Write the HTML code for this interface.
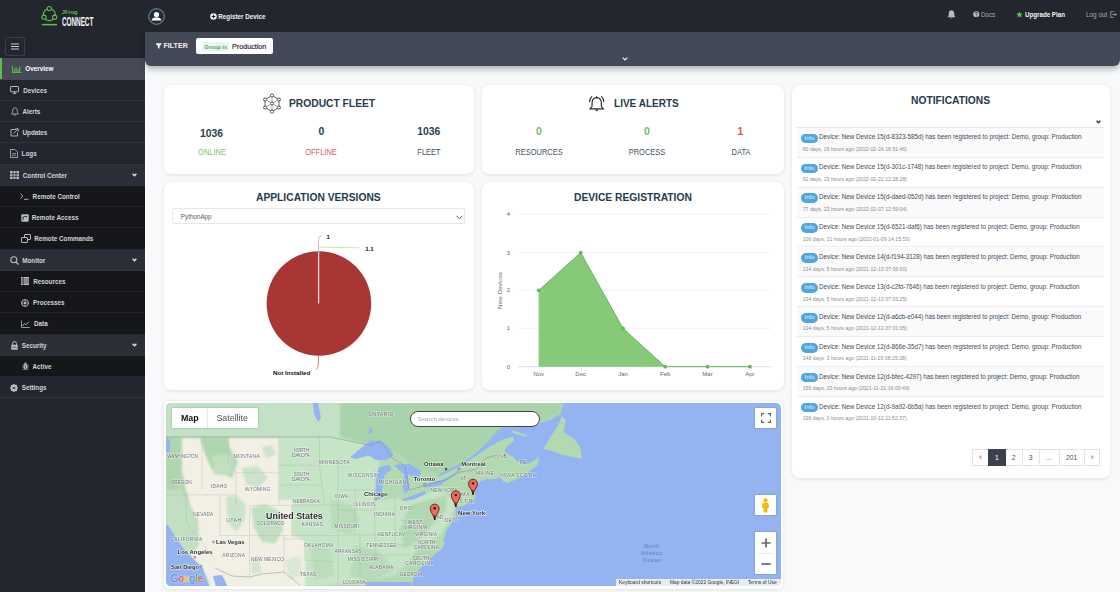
<!DOCTYPE html>
<html><head><meta charset="utf-8">
<style>
*{box-sizing:border-box;margin:0;padding:0}
html,body{width:1120px;height:592px;overflow:hidden;background:#f8f9fa;font-family:"Liberation Sans",sans-serif;position:relative}
.a{position:absolute}
#hdr{left:0;top:0;width:1120px;height:32px;background:#23262e}
#side{left:0;top:32px;width:145px;height:560px;background:#23262e}
.row{position:absolute;left:0;width:145px;height:21.25px;border-bottom:1px solid #30333b;color:#d3d4d7;font-size:6.3px;font-weight:bold;line-height:21.2px;white-space:nowrap}
.row.sub{background:#16171b;border-bottom:1px solid #24262b}
.row.grp{background:#2b2e36}
.row .ic{position:absolute;top:0;height:21.2px;display:flex;align-items:center}
.row .tx{position:absolute;top:0}
.chev{position:absolute;right:9px;top:0}
#filter{left:145px;top:32px;width:975px;height:33.5px;background:#444957;border-radius:0 0 6px 6px;box-shadow:0 3px 6px rgba(0,0,0,0.3)}
.card{position:absolute;background:#fff;border-radius:7px;box-shadow:0 1px 4px rgba(0,0,0,0.09),0 0 1px rgba(0,0,0,0.08)}
.ttl{position:absolute;font-weight:bold;color:#253a4d;font-size:11.8px;line-height:14px;white-space:nowrap;transform-origin:0 0;transform:scaleX(0.87)}
.num{position:absolute;font-weight:bold;font-size:10.4px;margin-top:0.9px;color:#2c3e50;white-space:nowrap;text-align:center;width:60px}
.lbl{position:absolute;font-size:8.3px;transform:scaleX(0.9);transform-origin:50% 0;margin-top:-0.2px;color:#3f5163;white-space:nowrap;text-align:center;width:80px}
</style></head><body>
<div id="hdr" class="a">
  <!-- logo -->
  <svg class="a" style="left:40px;top:3px" width="20" height="24" viewBox="0 0 20 24">
    <circle cx="9.3" cy="11.6" r="6" fill="none" stroke="#5cbf4a" stroke-width="1.2"/>
    <g fill="#23262e" stroke="#5cbf4a" stroke-width="1.1">
      <circle cx="9.3" cy="5.6" r="2.1"/>
      <circle cx="4" cy="14.2" r="2.1"/>
      <circle cx="14.6" cy="14.2" r="2.1"/>
    </g>
    <rect x="1.8" y="20.9" width="15.2" height="1.5" fill="#5cbf4a"/>
  </svg>
  <div class="a" style="left:61.8px;top:9.2px;font-size:5.7px;font-weight:bold;color:#5cbf4a;line-height:7px">JFrog</div>
  <div class="a" style="left:61.8px;top:14.7px;font-size:12px;font-weight:bold;color:#f2f2f2;transform:scaleX(0.54);transform-origin:0 0;letter-spacing:-0.2px">CONNECT</div>
  <!-- avatar -->
  <svg class="a" style="left:147.5px;top:8px" width="17" height="17" viewBox="0 0 17 17">
    <circle cx="8.5" cy="8.5" r="7.8" fill="#1e2f3d" stroke="#8a9096" stroke-width="1"/>
    <circle cx="8.5" cy="6.6" r="2.6" fill="#fff"/>
    <path d="M3.6 12.6 Q4 9.6 7.2 9.4 L9.8 9.4 Q13 9.6 13.4 12.6 Z" fill="#fff"/>
  </svg>
  <!-- register device -->
  <svg class="a" style="left:209.8px;top:13px" width="7" height="7" viewBox="0 0 7 7">
    <circle cx="3.5" cy="3.5" r="3.3" fill="#f0f0f0"/>
    <path d="M3.5 1.7V5.3M1.7 3.5H5.3" stroke="#23262e" stroke-width="1.1"/>
  </svg>
  <div class="a" style="left:218.3px;top:12.9px;font-size:6.3px;font-weight:bold;color:#f0f0f0">Register Device</div>
  <!-- bell -->
  <svg class="a" style="left:946.5px;top:10px" width="9" height="9" viewBox="0 0 9 9">
    <path d="M4.5 0.3 C2.3 0.6 1.7 2.3 1.7 4.3 L1.5 6 L0.5 7.2 H8.5 L7.5 6 L7.3 4.3 C7.3 2.3 6.7 0.6 4.5 0.3Z" fill="#b9bbbf"/>
    <path d="M3.3 7.7 Q4.5 9.3 5.7 7.7Z" fill="#b9bbbf"/>
  </svg>
  <svg class="a" style="left:973px;top:11px" width="6.5" height="6.5" viewBox="0 0 7 7">
    <circle cx="3.5" cy="3.5" r="3.3" fill="#b9bbbf"/>
    <path d="M2.3 2.7 Q2.4 1.5 3.5 1.5 Q4.7 1.5 4.7 2.5 Q4.7 3.2 3.8 3.6 L3.6 4.4" fill="none" stroke="#23262e" stroke-width="0.9"/>
    <circle cx="3.6" cy="5.3" r="0.5" fill="#23262e"/>
  </svg>
  <div class="a" style="left:980.6px;top:10.7px;font-size:6.8px;color:#a9abb0;transform:scaleX(0.92);transform-origin:0 0">Docs</div>
  <svg class="a" style="left:1016px;top:10.6px" width="7" height="7" viewBox="0 0 24 24"><path d="M12 1.5l3.3 7 7.6.9-5.6 5.2 1.5 7.5L12 18.3l-6.8 3.8 1.5-7.5L1.1 9.4l7.6-.9z" fill="#5cbf4a"/></svg>
  <div class="a" style="left:1024.5px;top:10.7px;font-size:6.4px;font-weight:bold;color:#f4f4f4;transform:scaleX(0.97);transform-origin:0 0">Upgrade Plan</div>
  <div class="a" style="left:1085.8px;top:10.7px;font-size:6.6px;color:#a9abb0;transform:scaleX(0.97);transform-origin:0 0">Log out</div>
  <svg class="a" style="left:1109.5px;top:10.5px" width="7" height="7" viewBox="0 0 7 7"><path d="M3.8 0.6H0.7V6.4H3.8" fill="none" stroke="#a9abb0" stroke-width="0.8"/><path d="M2.3 3.5H6.2M4.8 2 L6.3 3.5 L4.8 5" fill="none" stroke="#a9abb0" stroke-width="0.8"/></svg>
</div>

<div id="side" class="a">
<div class="a" style="left:5px;top:5px;width:20px;height:18.5px;border:1px solid #3b3e46;border-radius:2px"></div>
<svg class="a" style="left:11px;top:10.5px" width="8" height="7" viewBox="0 0 8 7"><path d="M0 1H8M0 3.5H8M0 6H8" stroke="#c9cacd" stroke-width="1"/></svg>
<div class="row" style="top:26.30px;background:#454a56;color:#fff;border-bottom-color:#454a56;">
<div class="a" style="left:0;top:0;width:2px;height:100%;background:#5cbf4a"></div>
<div class="ic" style="left:11.5px"><svg width="10" height="8" viewBox="0 0 10 8"><path d="M0.5 0.5V7.5H9.5" fill="none" stroke="#5cbf4a" stroke-width="0.9"/><path d="M2.3 7V3.5M4.1 7V2M5.9 7V4M7.7 7V1.5" stroke="#5cbf4a" stroke-width="1.1"/></svg></div>
<div class="tx" style="left:25.3px">Overview</div>
</div>
<div class="row" style="top:47.55px;">
<div class="ic" style="left:10.0px"><svg width="9" height="8" viewBox="0 0 9 8"><rect x="0.5" y="0.5" width="8" height="5.3" rx="0.6" fill="none" stroke="#b9bbbe" stroke-width="1"/><path d="M3 7.4H6M4.5 6V7.4" stroke="#b9bbbe" stroke-width="1"/></svg></div>
<div class="tx" style="left:23.3px">Devices</div>
</div>
<div class="row" style="top:68.80px;">
<div class="ic" style="left:10.5px"><svg width="8" height="9" viewBox="0 0 8 9"><path d="M4 0.8 C2.2 1 1.7 2.4 1.7 4.2 L1.5 5.8 L0.6 7 H7.4 L6.5 5.8 L6.3 4.2 C6.3 2.4 5.8 1 4 0.8Z" fill="none" stroke="#b9bbbe" stroke-width="0.8"/><path d="M3 7.6 Q4 8.8 5 7.6" fill="none" stroke="#b9bbbe" stroke-width="0.8"/></svg></div>
<div class="tx" style="left:22.5px">Alerts</div>
</div>
<div class="row" style="top:90.05px;">
<div class="ic" style="left:10.0px"><svg width="9" height="9" viewBox="0 0 9 9"><path d="M6 1.5H1V8H7.5V4.5" fill="none" stroke="#b9bbbe" stroke-width="0.9"/><path d="M3.5 5.5 L8 1 M5.5 0.8H8.2V3.5" fill="none" stroke="#b9bbbe" stroke-width="0.9"/></svg></div>
<div class="tx" style="left:22.5px">Updates</div>
</div>
<div class="row" style="top:111.30px;">
<div class="ic" style="left:10.0px"><svg width="8" height="9" viewBox="0 0 8 9"><path d="M0.5 0.5H5L7.5 3V8.5H0.5Z" fill="none" stroke="#b9bbbe" stroke-width="0.8"/><path d="M2 4.5H6M2 6.3H6" stroke="#b9bbbe" stroke-width="0.7"/></svg></div>
<div class="tx" style="left:21.6px">Logs</div>
</div>
<div class="row grp" style="top:132.55px;">
<div class="ic" style="left:10.0px"><svg width="9" height="8" viewBox="0 0 9 8"><path d="M0 0H9V8H0Z" fill="#b9bbbe"/><path d="M3 0V8M6 0V8M0 2.7H9M0 5.3H9" stroke="#2b2e36" stroke-width="0.8"/></svg></div>
<div class="tx" style="left:22.8px">Control Center</div>
<svg class="chev" style="top:8.6px;right:8.5px" width="5" height="4" viewBox="0 0 5 4"><path d="M0.6 0.8 L2.5 2.8 L4.4 0.8" fill="none" stroke="#e6e6e6" stroke-width="1.3"/></svg>
</div>
<div class="row sub" style="top:153.80px;">
<div class="ic" style="left:20.0px"><svg width="9" height="7" viewBox="0 0 9 7"><path d="M0.5 0.8 L3 3.2 L0.5 5.6" fill="none" stroke="#b9bbbe" stroke-width="0.9"/><path d="M4 6.3H8.5" stroke="#b9bbbe" stroke-width="0.9"/></svg></div>
<div class="tx" style="left:32.6px">Remote Control</div>
</div>
<div class="row sub" style="top:175.05px;">
<div class="ic" style="left:20.5px"><svg width="8" height="8" viewBox="0 0 8 8"><rect x="0.3" y="0.3" width="7.4" height="7.4" rx="1" fill="#b9bbbe"/><path d="M2 6 V4 Q2 2.6 3.4 2.6 H6" fill="none" stroke="#16171b" stroke-width="0.9"/></svg></div>
<div class="tx" style="left:31.8px">Remote Access</div>
</div>
<div class="row sub" style="top:196.30px;">
<div class="ic" style="left:20.5px"><svg width="10" height="9" viewBox="0 0 10 9"><rect x="3.5" y="0.5" width="6" height="5" rx="0.5" fill="none" stroke="#b9bbbe" stroke-width="1"/><rect x="0.5" y="3.5" width="6" height="5" rx="0.5" fill="#16171b" stroke="#b9bbbe" stroke-width="1"/></svg></div>
<div class="tx" style="left:34.2px">Remote Commands</div>
</div>
<div class="row grp" style="top:217.55px;">
<div class="ic" style="left:10.0px"><svg width="9" height="9" viewBox="0 0 9 9"><circle cx="3.8" cy="3.8" r="3" fill="none" stroke="#b9bbbe" stroke-width="1.1"/><path d="M6 6 L8.5 8.5" stroke="#b9bbbe" stroke-width="1.3"/></svg></div>
<div class="tx" style="left:22.2px">Monitor</div>
<svg class="chev" style="top:8.6px;right:8.5px" width="5" height="4" viewBox="0 0 5 4"><path d="M0.6 0.8 L2.5 2.8 L4.4 0.8" fill="none" stroke="#e6e6e6" stroke-width="1.3"/></svg>
</div>
<div class="row sub" style="top:238.80px;">
<div class="ic" style="left:20.5px"><svg width="8" height="8" viewBox="0 0 8 8"><rect x="0" y="0" width="8" height="8" fill="#b9bbbe"/><path d="M0 2H8M0 4H8M0 6H8M2.2 0V8" stroke="#16171b" stroke-width="0.6"/></svg></div>
<div class="tx" style="left:33.2px">Resources</div>
</div>
<div class="row sub" style="top:260.05px;">
<div class="ic" style="left:20.5px"><svg width="8" height="8" viewBox="0 0 8 8"><circle cx="4" cy="4" r="3.4" fill="none" stroke="#b9bbbe" stroke-width="1"/><circle cx="4" cy="4" r="1.2" fill="#b9bbbe"/><path d="M4 0.6V7.4M0.6 4H7.4" stroke="#b9bbbe" stroke-width="0.7"/></svg></div>
<div class="tx" style="left:33.1px">Processes</div>
</div>
<div class="row sub" style="top:281.30px;">
<div class="ic" style="left:20.5px"><svg width="9" height="8" viewBox="0 0 9 8"><path d="M0.5 0.5V7.5H8.8" fill="none" stroke="#b9bbbe" stroke-width="0.8"/><path d="M1.5 6 L3.5 3.5 L5 4.8 L8 1.5" fill="none" stroke="#b9bbbe" stroke-width="0.9"/></svg></div>
<div class="tx" style="left:34.0px">Data</div>
</div>
<div class="row grp" style="top:302.55px;">
<div class="ic" style="left:10.5px"><svg width="7" height="9" viewBox="0 0 7 9"><path d="M1.5 4V2.6 Q1.5 0.6 3.5 0.6 Q5.5 0.6 5.5 2.6V4" fill="none" stroke="#b9bbbe" stroke-width="1"/><rect x="0.3" y="3.8" width="6.4" height="5" rx="0.6" fill="#b9bbbe"/><path d="M1.5 6.2H5.5" stroke="#2b2e36" stroke-width="0.6"/></svg></div>
<div class="tx" style="left:21.7px">Security</div>
<svg class="chev" style="top:8.6px;right:8.5px" width="5" height="4" viewBox="0 0 5 4"><path d="M0.6 0.8 L2.5 2.8 L4.4 0.8" fill="none" stroke="#e6e6e6" stroke-width="1.3"/></svg>
</div>
<div class="row sub" style="top:323.80px;">
<div class="ic" style="left:21.5px"><svg width="7" height="8" viewBox="0 0 7 8"><ellipse cx="3.5" cy="4.8" rx="2" ry="2.8" fill="#b9bbbe"/><circle cx="3.5" cy="1.6" r="1.1" fill="#b9bbbe"/><path d="M0.3 3H6.7M0.3 5H6.7M0.5 7.3H6.5" stroke="#b9bbbe" stroke-width="0.6"/><path d="M3.5 3V7.5" stroke="#16171b" stroke-width="0.5"/></svg></div>
<div class="tx" style="left:32.5px">Active</div>
</div>
<div class="row" style="top:345.05px;">
<div class="ic" style="left:10.0px"><svg width="8" height="8" viewBox="0 0 8 8"><circle cx="4" cy="4" r="2.6" fill="none" stroke="#b9bbbe" stroke-width="1.6"/><path d="M4 0V8M0 4H8M1.2 1.2L6.8 6.8M6.8 1.2L1.2 6.8" stroke="#b9bbbe" stroke-width="1.2"/><circle cx="4" cy="4" r="1" fill="#262930"/></svg></div>
<div class="tx" style="left:21.7px">Settings</div>
</div>
</div>
<div id="strip" class="a" style="left:145px;top:32px;width:1.2px;height:560px;background:#fff"></div>
<div id="filter" class="a">
  <svg class="a" style="left:11px;top:10.6px" width="5.5" height="6" viewBox="0 0 6 6"><path d="M0 0H6V1L3.9 3.2V6L2.1 5.2V3.2L0 1Z" fill="#f0f0f0"/></svg>
  <div class="a" style="left:18.5px;top:9.6px;font-size:7.1px;font-weight:bold;color:#f2f2f2;line-height:1.2">FILTER</div>
  <div class="a" style="left:51.2px;top:6.3px;width:77px;height:15.8px;background:#fff;border-radius:2px">
    <div class="a" style="left:6.3px;top:4.2px;width:27px;height:9px;background:#e9f5ee;border-radius:1px"></div>
    <div class="a" style="left:8px;top:5.5px;font-size:5.6px;font-weight:bold;color:#4aa37a;line-height:1.2">Group is</div>
    <div class="a" style="left:35.8px;top:4.8px;font-size:7.2px;color:#1f2329;line-height:1.2;-webkit-text-stroke:0.15px #1f2329">Production</div>
  </div>
  <svg class="a" style="left:477px;top:25px" width="6" height="4" viewBox="0 0 6 4"><path d="M0.7 0.7 L3 3 L5.3 0.7" fill="none" stroke="#f4f4f4" stroke-width="1.2"/></svg>
</div>

<!-- PRODUCT FLEET -->
<div class="card" style="left:164px;top:85px;width:310px;height:89px">
  <svg class="a" style="left:98.1px;top:7.7px" width="20" height="21" viewBox="0 0 20 21">
    <g fill="none" stroke="#555" stroke-width="0.55">
      <path d="M10 2.5V18.5M3.07 6.5L16.93 14.5M16.93 6.5L3.07 14.5"/>
    </g>
    <path d="M10 2.5 L16.93 6.5 L16.93 14.5 L10 18.5 L3.07 14.5 L3.07 6.5 Z" fill="none" stroke="#444" stroke-width="0.85"/>
    <g fill="#fff" stroke="#444" stroke-width="0.85">
      <circle cx="10" cy="2.5" r="1.6"/><circle cx="16.93" cy="6.5" r="1.6"/><circle cx="16.93" cy="14.5" r="1.6"/>
      <circle cx="10" cy="18.5" r="1.6"/><circle cx="3.07" cy="14.5" r="1.6"/><circle cx="3.07" cy="6.5" r="1.6"/>
      <circle cx="10" cy="10.5" r="1.5"/>
    </g>
  </svg>
  <div class="ttl" style="left:125px;top:11.3px">PRODUCT FLEET</div>
  <div class="num" style="left:17.5px;top:42.6px">1036</div>
  <div class="num" style="left:127.3px;top:40.5px">0</div>
  <div class="num" style="left:234.8px;top:40.5px">1036</div>
  <div class="lbl" style="left:7.6px;top:62.5px;color:#77c36c">ONLINE</div>
  <div class="lbl" style="left:117.2px;top:62.5px;color:#de5b57">OFFLINE</div>
  <div class="lbl" style="left:224.5px;top:62.5px">FLEET</div>
</div>

<!-- LIVE ALERTS -->
<div class="card" style="left:482px;top:85px;width:302px;height:89px">
  <svg class="a" style="left:105px;top:8.7px" width="20" height="20" viewBox="0 0 20 20">
    <g fill="none" stroke="#2a2a2a" stroke-width="1.15" stroke-linecap="round">
      <path d="M9.7 3.6 C6.6 3.7 5.2 5.6 5.1 8.5 L5 12.6 L3 14.9 H16.4 L14.4 12.6 L14.3 8.5 C14.2 5.6 12.8 3.7 9.7 3.6Z"/>
      <path d="M4.8 2.6 Q3 4.4 2.6 7.6"/>
      <path d="M14.6 2.6 Q16.4 4.4 16.8 7.6"/>
    </g>
    <path d="M8.7 3.8 L9.7 1.6 L10.7 3.8Z" fill="#2a2a2a"/>
    <path d="M8.4 15.3 Q8.4 17.3 9.7 17.3 Q11 17.3 11 15.3Z" fill="#2a2a2a"/>
  </svg>
  <div class="ttl" style="left:131.7px;top:10.8px;transform:scaleX(0.85)">LIVE ALERTS</div>
  <div class="num" style="left:26.8px;top:40.5px;color:#6cbf63">0</div>
  <div class="num" style="left:134.8px;top:40.5px;color:#6cbf63">0</div>
  <div class="num" style="left:228.5px;top:40.5px;color:#d9534f">1</div>
  <div class="lbl" style="left:17px;top:62.5px">RESOURCES</div>
  <div class="lbl" style="left:125px;top:62.5px">PROCESS</div>
  <div class="lbl" style="left:219px;top:62.5px">DATA</div>
</div>

<!-- APPLICATION VERSIONS -->
<div class="card" style="left:164px;top:182px;width:310px;height:208px">
  <div class="ttl" style="left:92px;top:8.2px">APPLICATION VERSIONS</div>
  <div class="a" style="left:7.7px;top:26.4px;width:293.8px;height:16px;border:1px solid #e6e7e9;border-radius:2px">
    <div class="a" style="left:8.1px;top:3.7px;font-size:6.3px;color:#5a5d62;line-height:8px">PythonApp</div>
    <svg class="a" style="left:283px;top:5.2px" width="7" height="5" viewBox="0 0 7 5"><path d="M0.6 0.8 L3.5 3.8 L6.4 0.8" fill="none" stroke="#444" stroke-width="0.9"/></svg>
  </div>
  <svg class="a" style="left:0;top:0" width="310" height="208" viewBox="0 0 310 208">
    <circle cx="154.9" cy="121.5" r="52.3" fill="#a83733"/>
    <path d="M154.6 69.5V121.5" stroke="#ecd6d6" stroke-width="1.3"/>
    <path d="M154.6 69.5 L154.3 60 Q154.3 54.5 157.5 53.5" fill="none" stroke="#b79bd8" stroke-width="0.8"/>
    <path d="M154.6 67 Q154.6 65.2 158 65.2 L195.4 65.8" fill="none" stroke="#c6e3a2" stroke-width="0.9"/>
    <path d="M154.6 174 L154.3 182 Q154 186.5 152 187.5" fill="none" stroke="#c85a55" stroke-width="0.8"/>
    <text x="162.5" y="57" font-family="Liberation Sans" font-weight="bold" font-size="6" fill="#111">1</text>
    <text x="201.2" y="69.2" font-family="Liberation Sans" font-weight="bold" font-size="6.1" fill="#111">1.1</text>
    <text x="109.1" y="193" font-family="Liberation Sans" font-weight="bold" font-size="6.2" fill="#111">Not Installed</text>
  </svg>
</div>

<!-- DEVICE REGISTRATION -->
<div class="card" style="left:482px;top:182px;width:302px;height:208px">
  <div class="ttl" style="left:91.8px;top:8.2px">DEVICE REGISTRATION</div>
  <svg class="a" style="left:0;top:0" width="302" height="208" viewBox="0 0 302 208">
    <g stroke="#eef0f2" stroke-width="0.8">
      <path d="M36 32.3H289M36 70.6H289M36 108.4H289M36 146.4H289"/>
    </g>
    <path d="M36 184.7H289" stroke="#ccd6eb" stroke-width="0.8"/>
    <g font-family="Liberation Sans" font-size="6" fill="#666" text-anchor="middle">
      <text x="26.3" y="34.3">4</text><text x="26.3" y="72.6">3</text><text x="26.3" y="110.4">2</text><text x="26.3" y="148.4">1</text><text x="26.3" y="186.7">0</text>
      <text x="56.7" y="194.3">Nov</text><text x="98.7" y="194.3">Dec</text><text x="141" y="194.3">Jan</text><text x="183.2" y="194.3">Feb</text><text x="225.5" y="194.3">Mar</text><text x="267.9" y="194.3">Apr</text>
      <text transform="translate(19.9 108.5) rotate(-90)" x="0" y="0" font-size="6.1" textLength="37" lengthAdjust="spacingAndGlyphs">New Devices</text>
    </g>
    <path d="M56.7 108.4 L98.7 70.6 L141 146.4 L183.2 184.7 L56.7 184.7 Z" fill="#86c979"/>
    <path d="M56.7 108.4 L98.7 70.6 L141 146.4 L183.2 184.7 L225.5 184.7 L267.9 184.7" fill="none" stroke="#62b853" stroke-width="1"/>
    <g fill="#62b853">
      <circle cx="56.7" cy="108.4" r="1.9"/><circle cx="98.7" cy="70.6" r="1.9"/><circle cx="141" cy="146.4" r="1.9"/>
      <circle cx="183.2" cy="184.7" r="1.9"/><circle cx="225.5" cy="184.7" r="1.9"/><circle cx="267.9" cy="184.7" r="1.9"/>
    </g>
  </svg>
</div>

<!-- NOTIFICATIONS -->
<div class="card" style="left:792px;top:85px;width:317.5px;height:392.8px">
<div class="ttl" style="left:118.5px;top:8.2px">NOTIFICATIONS</div>
<svg class="a" style="left:303.6px;top:35.2px" width="5" height="4" viewBox="0 0 5 4"><path d="M0.6 0.8 L2.5 2.8 L4.4 0.8" fill="none" stroke="#333" stroke-width="1.3"/></svg>
<div class="a" style="left:4.7px;top:42.2px;width:307.5px;height:0;border-top:1px solid #e6e7e9"></div>
<div class="a" style="left:4.7px;top:42.70px;width:307.5px;height:29.95px;background:#fafafa;border-bottom:1px solid #ededef">
<div class="a" style="left:4.3px;top:5.9px;width:17.1px;height:9.3px;background:#4fa5de;border-radius:5px;color:#e6f2fb;font-size:5.9px;line-height:9.3px;text-align:center">Info</div>
<div class="a" style="left:22.8px;top:4.7px;font-size:6.5px;color:#3b4a59;white-space:nowrap;line-height:10px;transform:scaleX(0.965);transform-origin:0 0">Device: New Device 15(d-8323-585d) has been registered to project: Demo, group: Production</div>
<div class="a" style="left:6px;top:17.1px;font-size:5.2px;color:#8a8d92;white-space:nowrap;line-height:8px">60 days, 19 hours ago (2022-02-24 16:51:46)</div>
</div>
<div class="a" style="left:4.7px;top:72.65px;width:307.5px;height:29.95px;background:#fff;border-bottom:1px solid #ededef">
<div class="a" style="left:4.3px;top:5.9px;width:17.1px;height:9.3px;background:#4fa5de;border-radius:5px;color:#e6f2fb;font-size:5.9px;line-height:9.3px;text-align:center">Info</div>
<div class="a" style="left:22.8px;top:4.7px;font-size:6.5px;color:#3b4a59;white-space:nowrap;line-height:10px;transform:scaleX(0.965);transform-origin:0 0">Device: New Device 15(d-301c-1748) has been registered to project: Demo, group: Production</div>
<div class="a" style="left:6px;top:17.1px;font-size:5.2px;color:#8a8d92;white-space:nowrap;line-height:8px">62 days, 23 hours ago (2022-02-22 12:28:28)</div>
</div>
<div class="a" style="left:4.7px;top:102.60px;width:307.5px;height:29.95px;background:#fafafa;border-bottom:1px solid #ededef">
<div class="a" style="left:4.3px;top:5.9px;width:17.1px;height:9.3px;background:#4fa5de;border-radius:5px;color:#e6f2fb;font-size:5.9px;line-height:9.3px;text-align:center">Info</div>
<div class="a" style="left:22.8px;top:4.7px;font-size:6.5px;color:#3b4a59;white-space:nowrap;line-height:10px;transform:scaleX(0.965);transform-origin:0 0">Device: New Device 15(d-daed-052d) has been registered to project: Demo, group: Production</div>
<div class="a" style="left:6px;top:17.1px;font-size:5.2px;color:#8a8d92;white-space:nowrap;line-height:8px">77 days, 23 hours ago (2022-02-07 12:59:04)</div>
</div>
<div class="a" style="left:4.7px;top:132.55px;width:307.5px;height:29.95px;background:#fff;border-bottom:1px solid #ededef">
<div class="a" style="left:4.3px;top:5.9px;width:17.1px;height:9.3px;background:#4fa5de;border-radius:5px;color:#e6f2fb;font-size:5.9px;line-height:9.3px;text-align:center">Info</div>
<div class="a" style="left:22.8px;top:4.7px;font-size:6.5px;color:#3b4a59;white-space:nowrap;line-height:10px;transform:scaleX(0.965);transform-origin:0 0">Device: New Device 15(d-6521-daf6) has been registered to project: Demo, group: Production</div>
<div class="a" style="left:6px;top:17.1px;font-size:5.2px;color:#8a8d92;white-space:nowrap;line-height:8px">106 days, 21 hours ago (2022-01-09 14:15:53)</div>
</div>
<div class="a" style="left:4.7px;top:162.50px;width:307.5px;height:29.95px;background:#fafafa;border-bottom:1px solid #ededef">
<div class="a" style="left:4.3px;top:5.9px;width:17.1px;height:9.3px;background:#4fa5de;border-radius:5px;color:#e6f2fb;font-size:5.9px;line-height:9.3px;text-align:center">Info</div>
<div class="a" style="left:22.8px;top:4.7px;font-size:6.5px;color:#3b4a59;white-space:nowrap;line-height:10px;transform:scaleX(0.965);transform-origin:0 0">Device: New Device 14(d-f194-3128) has been registered to project: Demo, group: Production</div>
<div class="a" style="left:6px;top:17.1px;font-size:5.2px;color:#8a8d92;white-space:nowrap;line-height:8px">134 days, 5 hours ago (2021-12-13 07:06:00)</div>
</div>
<div class="a" style="left:4.7px;top:192.45px;width:307.5px;height:29.95px;background:#fff;border-bottom:1px solid #ededef">
<div class="a" style="left:4.3px;top:5.9px;width:17.1px;height:9.3px;background:#4fa5de;border-radius:5px;color:#e6f2fb;font-size:5.9px;line-height:9.3px;text-align:center">Info</div>
<div class="a" style="left:22.8px;top:4.7px;font-size:6.5px;color:#3b4a59;white-space:nowrap;line-height:10px;transform:scaleX(0.965);transform-origin:0 0">Device: New Device 13(d-c2fd-7646) has been registered to project: Demo, group: Production</div>
<div class="a" style="left:6px;top:17.1px;font-size:5.2px;color:#8a8d92;white-space:nowrap;line-height:8px">134 days, 5 hours ago (2021-12-13 07:03:25)</div>
</div>
<div class="a" style="left:4.7px;top:222.40px;width:307.5px;height:29.95px;background:#fafafa;border-bottom:1px solid #ededef">
<div class="a" style="left:4.3px;top:5.9px;width:17.1px;height:9.3px;background:#4fa5de;border-radius:5px;color:#e6f2fb;font-size:5.9px;line-height:9.3px;text-align:center">Info</div>
<div class="a" style="left:22.8px;top:4.7px;font-size:6.5px;color:#3b4a59;white-space:nowrap;line-height:10px;transform:scaleX(0.965);transform-origin:0 0">Device: New Device 12(d-a6cb-e044) has been registered to project: Demo, group: Production</div>
<div class="a" style="left:6px;top:17.1px;font-size:5.2px;color:#8a8d92;white-space:nowrap;line-height:8px">134 days, 5 hours ago (2021-12-13 07:01:05)</div>
</div>
<div class="a" style="left:4.7px;top:252.35px;width:307.5px;height:29.95px;background:#fff;border-bottom:1px solid #ededef">
<div class="a" style="left:4.3px;top:5.9px;width:17.1px;height:9.3px;background:#4fa5de;border-radius:5px;color:#e6f2fb;font-size:5.9px;line-height:9.3px;text-align:center">Info</div>
<div class="a" style="left:22.8px;top:4.7px;font-size:6.5px;color:#3b4a59;white-space:nowrap;line-height:10px;transform:scaleX(0.965);transform-origin:0 0">Device: New Device 12(d-866e-35d7) has been registered to project: Demo, group: Production</div>
<div class="a" style="left:6px;top:17.1px;font-size:5.2px;color:#8a8d92;white-space:nowrap;line-height:8px">148 days, 3 hours ago (2021-11-29 08:25:28)</div>
</div>
<div class="a" style="left:4.7px;top:282.30px;width:307.5px;height:29.95px;background:#fafafa;border-bottom:1px solid #ededef">
<div class="a" style="left:4.3px;top:5.9px;width:17.1px;height:9.3px;background:#4fa5de;border-radius:5px;color:#e6f2fb;font-size:5.9px;line-height:9.3px;text-align:center">Info</div>
<div class="a" style="left:22.8px;top:4.7px;font-size:6.5px;color:#3b4a59;white-space:nowrap;line-height:10px;transform:scaleX(0.965);transform-origin:0 0">Device: New Device 12(d-bfec-4297) has been registered to project: Demo, group: Production</div>
<div class="a" style="left:6px;top:17.1px;font-size:5.2px;color:#8a8d92;white-space:nowrap;line-height:8px">155 days, 20 hours ago (2021-11-21 16:00:49)</div>
</div>
<div class="a" style="left:4.7px;top:312.25px;width:307.5px;height:29.95px;background:#fff;">
<div class="a" style="left:4.3px;top:5.9px;width:17.1px;height:9.3px;background:#4fa5de;border-radius:5px;color:#e6f2fb;font-size:5.9px;line-height:9.3px;text-align:center">Info</div>
<div class="a" style="left:22.8px;top:4.7px;font-size:6.5px;color:#3b4a59;white-space:nowrap;line-height:10px;transform:scaleX(0.965);transform-origin:0 0">Device: New Device 12(d-9a92-6b5a) has been registered to project: Demo, group: Production</div>
<div class="a" style="left:6px;top:17.1px;font-size:5.2px;color:#8a8d92;white-space:nowrap;line-height:8px">196 days, 0 hours ago (2021-10-12 11:52:37)</div>
</div>
<div class="a" style="left:180.2px;top:364.1px;width:16.8px;height:17px;border:1px solid #e3e4e6;text-align:center;line-height:15px;font-size:6.8px;color:#50555c;background:#fff;font-size:9px;line-height:14px;color:#555">‹</div>
<div class="a" style="left:196.0px;top:364.1px;width:17.6px;height:17px;border:1px solid #3b414c;text-align:center;line-height:15px;font-size:6.8px;color:#fff;background:#3b414c;z-index:1">1</div>
<div class="a" style="left:212.6px;top:364.1px;width:18.0px;height:17px;border:1px solid #e3e4e6;text-align:center;line-height:15px;font-size:6.8px;color:#50555c;background:#fff">2</div>
<div class="a" style="left:229.6px;top:364.1px;width:18.0px;height:17px;border:1px solid #e3e4e6;text-align:center;line-height:15px;font-size:6.8px;color:#50555c;background:#fff">3</div>
<div class="a" style="left:246.6px;top:364.1px;width:21.1px;height:17px;border:1px solid #e3e4e6;text-align:center;line-height:15px;font-size:6.8px;color:#50555c;background:#fff">…</div>
<div class="a" style="left:266.7px;top:364.1px;width:25.9px;height:17px;border:1px solid #e3e4e6;text-align:center;line-height:15px;font-size:6.8px;color:#50555c;background:#fff">201</div>
<div class="a" style="left:291.6px;top:364.1px;width:16.8px;height:17px;border:1px solid #e3e4e6;text-align:center;line-height:15px;font-size:6.8px;color:#50555c;background:#fff;font-size:9px;line-height:14px;color:#555">›</div>
</div>
<!-- MAP -->
<div class="card" style="left:164.3px;top:400.7px;width:619.2px;height:188px;border-radius:5px">
 <div class="a" style="left:1.7px;top:2.1px;width:615px;height:183.5px;overflow:hidden;background:#94b4f1;border-radius:5px">
  <svg class="a" style="left:0;top:0" width="615" height="184" viewBox="166 403 615 184">
    <defs><filter id="bl" x="-5%" y="-5%" width="110%" height="110%"><feGaussianBlur stdDeviation="1.2"/></filter><filter id="bl2" x="-20%" y="-20%" width="140%" height="140%"><feGaussianBlur stdDeviation="0.8"/></filter></defs>
    <!-- main land -->
    <path fill="#b3d9b3" d="M166.0 403.0 L563.7 403.0 L559.7 414.2 L549.5 420.3 L535.3 424.3 L517.1 426.4 L500.9 427.4 L494.8 432.5 L484.6 444.6 L476.5 452.7 L464.3 460.9 L452.2 466.9 L440.0 473.0 L438.0 476.0 L441.0 475.5 L458.3 467.5 L476.5 455.5 L490 446.5 L500.9 440.6 L513.0 436.5 L514.0 440.6 L507.0 446.7 L504.0 451.0 L509.0 454.8 L513.0 456.8 L517.1 460.9 L525.2 464.9 L533.3 460.9 L539.4 456.8 L537.4 464.9 L527.2 473.0 L517.1 479.1 L506.9 483.2 L502.9 481.1 L500.9 477.1 L494.8 479.1 L486.7 479.1 L480.6 481.1 L474.5 489.2 L475.5 497.4 L470.4 501.4 L464.3 505.5 L456.2 507.5 L455.5 516.7 L451.0 524.3 L446.4 530.4 L444.9 536.5 L443.3 539.5 L444.9 544.1 L440.3 550.2 L434.2 554.7 L428.1 560.8 L420.5 568.4 L414.5 574.5 L412.9 580.5 L412.2 587.0 L166.0 587.0Z"/>
    <!-- newfoundland -->
    <path fill="#b3d9b3" d="M543.4 448.7 L549.5 438.5 L557.6 426.4 L561.7 416.2 L565.8 420.3 L563.7 432.5 L573.9 438.5 L580.0 446.7 L582.0 458.8 L571.8 456.8 L561.7 454.8 L551.6 450.7Z"/>
    <path fill="#b3d9b3" d="M513 430.4 L527.2 435 L526 437 L512 432.5Z"/>
    <g filter="url(#bl)">
    <!-- dark forest canada -->
    <path fill="#a9d3aa" d="M330 403 L563.7 403 L559.7 414.2 L535.3 424.3 L500.9 427.4 L484.6 444.6 L464.3 460.9 L440 473 L420 470 L400 455 L370 445 L340 437 Z"/>
    <path fill="#c3e2c5" d="M166 403 L340 403 L340 437 L166 437 Z"/>
    <path fill="#c6e4c6" d="M279 437 L340 437 L370 445 L380 465 L376 500 L410 498 L440 490 L455 500 L452 517 L440 535 L420 545 L408 562 L395 575 L366 582 L305 587 L305 540 L292 536 L292 500 L279 500Z"/>
    <g fill="#afd6ae" opacity="0.9">
      <path d="M410 505 L430 500 L447 495 L446 510 L432 525 L420 540 L404 548 L400 530Z"/>
      <path d="M330 500 L352 505 L360 520 L350 535 L332 528Z" opacity="0.6"/>
      <path d="M355 545 L380 552 L395 570 L370 582 L350 575Z" opacity="0.7"/>
      <path d="M310 545 L330 548 L335 575 L315 580Z" opacity="0.5"/>
      <path d="M166 437 L182 437 L184 460 L178 490 L166 490Z"/>
      <path d="M202 437 L228 437 L230 452 L240 470 L232 478 L212 476 L205 460Z"/>
    </g>
    <!-- beige west -->
    <path fill="#f2efe5" d="M182 438 L200 438 L204 452 L212 470 L232 478 L238 462 L230 448 L228 438 L279 438 L279 500 L292 500 L292 536 L305 540 L305 587 L210 587 L207 577 L200 565 L190 556 L199 545 L198 520 L190 505 L186 490 L182 470 Z"/>
    <g fill="#c0e0c1">
      <path d="M251 508 L265 504 L281 512 L283 530 L275 544 L262 542 L254 528Z"/>
      <path d="M226 497 L236 495 L246 505 L244 522 L236 532 L228 522Z" opacity="0.8"/>
      <path d="M242 468 L258 466 L268 478 L258 488 L246 484Z" opacity="0.8"/>
      <path d="M212 456 L230 454 L236 468 L228 476 L214 474Z"/>
      <path d="M262 447 L272 445 L276 455 L266 458Z" opacity="0.7"/>
      <path d="M166 490 L182 490 L196 520 L199 545 L190 556 L175.8 544.1 L168.9 526.4 L166 524Z"/>
      <path d="M285 560 L300 556 L303 575 L290 580Z" opacity="0.5"/>
      <path d="M250 560 L258 556 L262 572 L252 574Z" opacity="0.6"/>
    </g>
    
    </g>
    <!-- pacific pieces -->
    <path fill="#94b4f1" d="M166 524 L168.9 526.4 L177 539.4 L186.7 552.4 L196.4 562 L202.9 568.6 L206.1 578.3 L209.4 587 L166 587Z"/>
    <path fill="#94b4f1" d="M213 576 L222 575 L228 587 L216 587Z"/>
    <path fill="#94b4f1" d="M366 582 L411.5 582 L411.5 587 L366 587Z"/>
    <path fill="#94b4f1" d="M166 437 L170 440 L170 452 L166 452Z"/>
    <!-- great lakes -->
    <g fill="#94b4f1">
      <path d="M350.3 457.2 L360.4 448.7 L370.5 440.3 L380.7 441.1 L390.8 448.7 L393.3 455.5 L385.7 460.5 L375.6 459.7 L368.9 455.5 L362.1 457.2 L355.3 458.9Z"/>
      <path d="M379 467.3 L389.1 464.8 L391.7 469 L384.1 475.7 L382.4 487.6 L381.5 497.7 L378.1 499.4 L375.6 490.9 L376.4 475.7Z"/>
      <path d="M394.2 464.8 L409.4 463.9 L421.2 470.7 L419.5 477.4 L414.5 477.4 L407.7 474.1 L409.4 487.6 L406 494.3 L402.6 487.6 L404.3 474.1 L397.6 469Z"/>
      <path d="M400.9 499.4 L411.1 496 L424.6 490.9 L426.3 493.5 L414.5 499.4 L404.3 501.1Z"/>
      <path d="M422 486.7 L431.4 482.5 L441.5 479.9 L443.2 484.2 L433 486.7 L424.6 487.6Z"/>
      <path d="M368.9 428.4 L372.2 428.4 L372.2 433.5 L368.9 433.5Z"/>
      <path d="M313 403 L318 403 L321 418 L318 422 L314 414Z"/>
      <path d="M441 481 L452 475 L458 470 L459 471.5 L443 483Z"/>
    </g>
    <!-- borders -->
    <g fill="none" stroke="#9ea59f" stroke-width="0.45" stroke-dasharray="0.9 0.7">
      <path d="M202 437V490 M228 437V462 L236 472 V505 M279 437V505 M319.5 437V465 L322 485 L325 505 M279 465.3H319.5 M236 472.7H279 M279 485H322 M166 494.8H236"/>
      <path d="M220 494.8V535.5 M249.5 505.5V577 M292 505.5V535.5 M249.5 505.5H292 M292 505H340 M220 535.5H305 M284 535.5V572 M284 539H305 V560 L335 562 M305 535.5H338"/>
      <path d="M186 494.8V522 L215 560 M338 465V587 M355 490V535 M360 535V587 M375 470V560 M395 500V545 M340 490H376 M338 510H375 M340 535H395 M360 555H410 M400 520L430 525 M395 545H430 M415 555L440 553"/>
    </g>
    <path d="M166 437H330 L370.5 445.3 L380.7 441.1 L392 458 L405 466 L409 490 L426 485 L445 480 L460 472 L475 470 L486 458 L497 455" fill="none" stroke="#7f8a84" stroke-width="0.5"/>
    <path d="M215 568 L232 576 L250 577 L262 574 L284 572 L300 585" fill="none" stroke="#8a8f8a" stroke-width="0.5"/>
    <!-- labels -->
    <g font-family="Liberation Sans" font-size="4.8" fill="#686c70" stroke="#ffffff" stroke-opacity="0.55" stroke-width="1" paint-order="stroke">
      <text x="167.2" y="457.5" textLength="30.8" lengthAdjust="spacing">WASHINGTON</text>
      <text x="233.7" y="458.4" textLength="25.9" lengthAdjust="spacing">MONTANA</text>
      <text x="293.5" y="451.9" textLength="15.5" lengthAdjust="spacing">NORTH</text>
      <text x="292.0" y="456.8" textLength="18.0" lengthAdjust="spacing">DAKOTA</text>
      <text x="293.5" y="476.3" textLength="15.5" lengthAdjust="spacing">SOUTH</text>
      <text x="292.0" y="481.1" textLength="18.0" lengthAdjust="spacing">DAKOTA</text>
      <text x="319.0" y="464.3" textLength="30.4" lengthAdjust="spacing">MINNESOTA</text>
      <text x="170.5" y="484.4" textLength="21.1" lengthAdjust="spacing">OREGON</text>
      <text x="211.0" y="487.6" textLength="16.2" lengthAdjust="spacing">IDAHO</text>
      <text x="245.0" y="490.8" textLength="25.3" lengthAdjust="spacing">WYOMING</text>
      <text x="293.0" y="502.8" textLength="26.6" lengthAdjust="spacing">NEBRASKA</text>
      <text x="193.2" y="515.8" textLength="20.1" lengthAdjust="spacing">NEVADA</text>
      <text x="226.2" y="521.6" textLength="14.9" lengthAdjust="spacing">UTAH</text>
      <text x="256.4" y="524.9" textLength="28.2" lengthAdjust="spacing">COLORADO</text>
      <text x="301.8" y="525.8" textLength="21.0" lengthAdjust="spacing">KANSAS</text>
      <text x="334.6" y="527.5" textLength="24.4" lengthAdjust="spacing">MISSOURI</text>
      <text x="170.5" y="541.1" textLength="31.7" lengthAdjust="spacing">CALIFORNIA</text>
      <text x="304.0" y="546.6" textLength="29.2" lengthAdjust="spacing">OKLAHOMA</text>
      <text x="334.6" y="553.4" textLength="26.9" lengthAdjust="spacing">ARKANSAS</text>
      <text x="222.3" y="556.7" textLength="22.7" lengthAdjust="spacing">ARIZONA</text>
      <text x="250.9" y="561.2" textLength="33.1" lengthAdjust="spacing">NEW MEXICO</text>
      <text x="347.8" y="561.2" textLength="30.8" lengthAdjust="spacing">MISSISSIPPI</text>
      <text x="300.1" y="576.1" textLength="16.2" lengthAdjust="spacing">TEXAS</text>
      <text x="343.0" y="583.9" textLength="22.7" lengthAdjust="spacing">LOUISIANA</text>
      <text x="334.6" y="498.3" textLength="13.4" lengthAdjust="spacing">IOWA</text>
      <text x="347.8" y="476.9" textLength="30.8" lengthAdjust="spacing">WISCONSIN</text>
      <text x="368.9" y="416.3" textLength="24.3" lengthAdjust="spacing">ONTARIO</text>
      <text x="378.6" y="484.4" textLength="27.6" lengthAdjust="spacing">MICHIGAN</text>
      <text x="499.3" y="458.4" textLength="7.4" lengthAdjust="spacing">NB</text>
      <text x="519.7" y="464.0" textLength="6.5" lengthAdjust="spacing">PE</text>
      <text x="475.9" y="474.7" textLength="17.8" lengthAdjust="spacing">MAINE</text>
      <text x="500.2" y="476.9" textLength="35.7" lengthAdjust="spacing">NOVA SCOTIA</text>
      <text x="460.3" y="479.5" textLength="5.9" lengthAdjust="spacing">VT</text>
      <text x="430.5" y="491.5" textLength="27.6" lengthAdjust="spacing">NEW YORK</text>
      <text x="461.3" y="495.7" textLength="8.1" lengthAdjust="spacing">MA</text>
      <text x="459.7" y="502.9" textLength="14.6" lengthAdjust="spacing">CT RI</text>
      <text x="354.3" y="506.4" textLength="21.1" lengthAdjust="spacing">ILLINOIS</text>
      <text x="399.7" y="509.7" textLength="13.0" lengthAdjust="spacing">OHIO</text>
      <text x="373.8" y="515.8" textLength="21.1" lengthAdjust="spacing">INDIANA</text>
      <text x="437.0" y="519.1" textLength="6.5" lengthAdjust="spacing">MD</text>
      <text x="445.1" y="522.3" textLength="6.5" lengthAdjust="spacing">DE</text>
      <text x="453.2" y="521.0" textLength="6.5" lengthAdjust="spacing">NJ</text>
      <text x="407.8" y="524.3" textLength="14.6" lengthAdjust="spacing">WEST</text>
      <text x="403.9" y="529.1" textLength="23.4" lengthAdjust="spacing">VIRGINIA</text>
      <text x="378.0" y="536.3" textLength="27.2" lengthAdjust="spacing">KENTUCKY</text>
      <text x="415.0" y="536.3" textLength="22.0" lengthAdjust="spacing">VIRGINIA</text>
      <text x="417.5" y="544.4" textLength="17.9" lengthAdjust="spacing">NORTH</text>
      <text x="413.7" y="549.2" textLength="24.9" lengthAdjust="spacing">CAROLINA</text>
      <text x="366.3" y="546.7" textLength="30.2" lengthAdjust="spacing">TENNESSEE</text>
      <text x="412.7" y="559.6" textLength="16.2" lengthAdjust="spacing">SOUTH</text>
      <text x="405.2" y="564.5" textLength="28.6" lengthAdjust="spacing">CAROLINA</text>
      <text x="368.9" y="569.3" textLength="24.3" lengthAdjust="spacing">ALABAMA</text>
      <text x="399.7" y="575.8" textLength="22.7" lengthAdjust="spacing">GEORGIA</text>
    </g>
    <g font-family="Liberation Sans" font-size="6.2" font-weight="bold" fill="#2b2b2b" stroke="#ffffff" stroke-opacity="0.8" stroke-width="1.2" paint-order="stroke">
      <text x="424.0" y="466.1" textLength="19.5" lengthAdjust="spacingAndGlyphs">Ottawa</text>
      <text x="461.3" y="466.1" textLength="24.3" lengthAdjust="spacingAndGlyphs">Montreal</text>
      <text x="413.7" y="481.0" textLength="21.7" lengthAdjust="spacingAndGlyphs">Toronto</text>
      <text x="364.0" y="495.6" textLength="23.7" lengthAdjust="spacingAndGlyphs">Chicago</text>
      <text x="458.1" y="515.0" textLength="26.9" lengthAdjust="spacingAndGlyphs">New York</text>
      <text x="215.9" y="544.2" textLength="28.5" lengthAdjust="spacingAndGlyphs">Las Vegas</text>
      <text x="177.6" y="553.9" textLength="35.0" lengthAdjust="spacingAndGlyphs">Los Angeles</text>
      <text x="171.1" y="568.5" textLength="27.9" lengthAdjust="spacingAndGlyphs">San Diego</text>
    </g>
    <text x="266.1" y="518.5" textLength="56.7" lengthAdjust="spacingAndGlyphs" font-family="Liberation Sans" font-size="9.4" font-weight="bold" fill="#2e2e2e" stroke="#fff" stroke-opacity="0.7" stroke-width="1.2" paint-order="stroke">United States</text>
    <g font-family="Liberation Sans" font-size="5.2" fill="#4f79c2" text-anchor="middle" letter-spacing="0.6">
      <text x="652" y="548">North</text><text x="652" y="555">Atlantic</text><text x="652" y="562">Ocean</text>
    </g>
    <!-- city dots -->
    <g fill="#fff" stroke="#555" stroke-width="0.6">
      <circle cx="424.7" cy="484.3" r="1"/><circle cx="376" cy="498.9" r="1"/><circle cx="213.5" cy="542" r="1"/><circle cx="194.8" cy="557.2" r="1"/><circle cx="201.3" cy="566.3" r="1"/><circle cx="459" cy="469.1" r="1"/>
    </g>
    <circle cx="446.1" cy="469.1" r="1.3" fill="#555"/>
    <!-- markers -->
    <g fill="#ec6b5e" stroke="#4e1a15" stroke-width="0.85">
      <path d="M434.7 520 C434 515 430.2 512.5 430.2 508.6 A4.5 4.5 0 0 1 439.2 508.6 C439.2 512.5 435.4 515 434.7 520Z"/>
      <path d="M455.8 507 C455.1 502 451.3 499.5 451.3 495.4 A4.5 4.5 0 0 1 460.3 495.4 C460.3 499.5 456.5 502 455.8 507Z"/>
      <path d="M473 494.7 C472.3 489.7 468.5 487.2 468.5 483.7 A4.5 4.5 0 0 1 477.5 483.7 C477.5 487.2 473.7 489.7 473 494.7Z"/>
    </g>
    <g fill="#2a0a08"><circle cx="434.7" cy="508.3" r="1.2"/><circle cx="455.8" cy="495.1" r="1.2"/><circle cx="473" cy="483.4" r="1.2"/></g>
    <g stroke="#2a0a08" stroke-width="1.1"><path d="M434.7 515.5V520"/><path d="M455.8 502.5V507"/><path d="M473 490.2V494.7"/></g>
  </svg>
  <!-- map/satellite -->
  <div class="a" style="left:5.6px;top:4.9px;width:86.8px;height:20px;background:#fff;box-shadow:0 0 2px rgba(0,0,0,0.3);border-radius:1px">
    <div class="a" style="left:9.4px;top:5px;font-size:8.9px;font-weight:bold;color:#111;line-height:11px">Map</div>
    <div class="a" style="left:35.6px;top:0;width:0;height:20px;border-left:1px solid #e6e6e6"></div>
    <div class="a" style="left:44.8px;top:5px;font-size:8.9px;color:#555;line-height:11px">Satellite</div>
  </div>
  <!-- search -->
  <div class="a" style="left:244.5px;top:7.9px;width:129.4px;height:16px;background:#fff;border:1px solid #444;border-radius:8px">
    <div class="a" style="left:6.3px;top:3.2px;font-size:6px;color:#a3a5a8;line-height:8px">Search devices</div>
  </div>
  <!-- fullscreen -->
  <div class="a" style="left:589.4px;top:4.9px;width:20.6px;height:20.7px;background:#fff;box-shadow:0 0 2px rgba(0,0,0,0.3);border-radius:1px">
    <svg class="a" style="left:5.5px;top:5.5px" width="10" height="10" viewBox="0 0 10 10"><path d="M0.6 3.3V0.6H3.3M6.7 0.6H9.4V3.3M9.4 6.7V9.4H6.7M3.3 9.4H0.6V6.7" fill="none" stroke="#666" stroke-width="1.2"/></svg>
  </div>
  <!-- pegman -->
  <div class="a" style="left:589.4px;top:92.1px;width:20.6px;height:20.6px;background:#fff;box-shadow:0 0 2px rgba(0,0,0,0.3);border-radius:1px">
    <svg class="a" style="left:6px;top:3px" width="9" height="15" viewBox="0 0 9 15"><circle cx="4.5" cy="2.3" r="2" fill="#f5b900"/><path d="M1.5 5 Q4.5 4 7.5 5 L8 10 L6.5 10 L6.3 14.5 L2.7 14.5 L2.5 10 L1 10Z" fill="#f5b900"/></svg>
  </div>
  <!-- zoom -->
  <div class="a" style="left:589.4px;top:129.3px;width:20.6px;height:42px;background:#fff;box-shadow:0 0 2px rgba(0,0,0,0.3);border-radius:1px">
    <svg class="a" style="left:5.3px;top:5.5px" width="10" height="10" viewBox="0 0 10 10"><path d="M0.5 5H9.5M5 0.5V9.5" stroke="#666" stroke-width="1.7"/></svg>
    <div class="a" style="left:3px;top:20.8px;width:14.6px;height:0;border-top:1px solid #e6e6e6"></div>
    <svg class="a" style="left:5.3px;top:26.5px" width="10" height="10" viewBox="0 0 10 10"><path d="M0.5 5H9.5" stroke="#666" stroke-width="1.7"/></svg>
  </div>
  <!-- google logo -->
  <div class="a" style="left:4.5px;top:170.5px;font-size:10px;font-weight:bold;line-height:11px;letter-spacing:-0.4px;color:#fff;text-shadow:0 0 1.5px rgba(255,255,255,0.9)">
    <span style="color:#6b8fe6">G</span><span style="color:#e4665c">o</span><span style="color:#f0c040">o</span><span style="color:#6b8fe6">g</span><span style="color:#5cb86a">l</span><span style="color:#e4665c">e</span>
  </div>
  <!-- attribution -->
  <div class="a" style="left:450.4px;top:176px;width:164.6px;height:7.3px;background:rgba(245,245,245,0.85);font-size:4.9px;line-height:7.3px;color:#333;white-space:nowrap">
    <span class="a" style="left:2.6px">Keyboard shortcuts</span>
    <span class="a" style="left:53.5px">Map data ©2022 Google, INEGI</span>
    <span class="a" style="left:131.5px">Terms of Use</span>
  </div>
 </div>
</div>

</body></html>
